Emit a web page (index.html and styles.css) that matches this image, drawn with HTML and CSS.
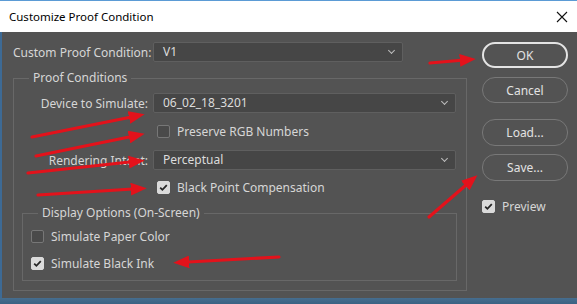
FILE: index.html
```html
<!DOCTYPE html>
<html lang="en">
<head>
    <meta charset="UTF-8">
    <meta name="viewport" content="width=device-width, initial-scale=1.0">
    <title>Customize Proof Condition</title>
    <link rel="stylesheet" href="styles.css">
</head>
<body>
    <div class="dialog">
        <header class="titlebar">
            <span class="title">Customize Proof Condition</span>
            <svg class="close" width="12" height="12" viewBox="0 0 12 12">
                <path d="M1 1 L11 11 M11 1 L1 11" stroke="#111" stroke-width="1.1" fill="none"/>
            </svg>
        </header>

        <div class="content">
            <div class="main">
                <div class="row">
                    <span class="label wide">Custom Proof Condition:</span>
                    <div class="select short">V1<span class="chev"></span></div>
                </div>

                <fieldset class="group outer">
                    <legend>Proof Conditions</legend>
                    <div class="row">
                        <span class="label">Device to Simulate:</span>
                        <div class="select">06_02_18_3201<span class="chev"></span></div>
                    </div>
                    <div class="check-row indent r-preserve">
                        <span class="box"></span>Preserve RGB Numbers
                    </div>
                    <div class="row r-intent">
                        <span class="label">Rendering Intent:</span>
                        <div class="select">Perceptual<span class="chev"></span></div>
                    </div>
                    <div class="check-row indent r-black">
                        <span class="box checked"></span>Black Point Compensation
                    </div>

                    <fieldset class="group inner">
                        <legend>Display Options (On-Screen)</legend>
                        <div class="check-row r-paper">
                            <span class="box"></span>Simulate Paper Color
                        </div>
                        <div class="check-row r-ink">
                            <span class="box checked"></span>Simulate Black Ink
                        </div>
                    </fieldset>
                </fieldset>
            </div>

            <div class="side">
                <button class="btn default">OK</button>
                <button class="btn b-cancel">Cancel</button>
                <button class="btn b-load">Load...</button>
                <button class="btn b-save">Save...</button>
                <div class="check-row r-preview">
                    <span class="box checked"></span>Preview
                </div>
            </div>
        </div>

        <div class="taskbar"></div>

        <!-- red annotation arrows drawn over the screenshot -->
        <svg class="marks" width="577" height="304" viewBox="0 0 577 304">
            <defs>
                <marker id="head" markerWidth="5" markerHeight="4" refX="3.2" refY="2" orient="auto" markerUnits="strokeWidth">
                    <path d="M0 0 L5 2 L0 4 Z" fill="#e3121b"/>
                </marker>
            </defs>
            <g stroke="#e3121b" stroke-width="3.2" stroke-linecap="round" fill="none" marker-end="url(#head)">
                <line x1="430" y1="63" x2="470" y2="59.5"/>
                <line x1="32" y1="137" x2="139" y2="115.5"/>
                <line x1="36" y1="156" x2="139" y2="135"/>
                <line x1="28" y1="173" x2="139" y2="161"/>
                <line x1="38" y1="195" x2="141" y2="188.5"/>
                <line x1="429" y1="217" x2="473" y2="179"/>
                <line x1="279" y1="257" x2="179" y2="262.5"/>
            </g>
        </svg>
    </div>
</body>
</html>
```

FILE: styles.css
```css
body {
    margin: 0;
    padding: 0;
    font-family: "Noto Sans", "Open Sans", sans-serif;
    background-color: #535353;
}
.dialog {
    position: relative;
    width: 577px;
    height: 304px;
    overflow: hidden;
    background-color: #535353;
}
.titlebar {
    display: flex;
    align-items: center;
    justify-content: space-between;
    height: 31px;
    border-top: 1px solid #5b9bd5;
    background-color: #fff;
    padding: 0 9px 0 9px;
}
.title {
    font-size: 11.5px;
    color: #000;
}
.content {
    display: flex;
    height: 256px;
    padding: 10px 0 0 11px;
    border-left: 2px solid #3d6a95;
}
.main {
    width: 454px;
}
.side {
    display: flex;
    flex-direction: column;
    width: 86px;
    margin-left: 15px;
}
.taskbar {
    height: 6px;
    background: linear-gradient(#466d8e, #3a6283);
}

.row {
    display: flex;
    align-items: center;
    height: 20px;
}
.label {
    width: 134px;
    margin-right: 5px;
    text-align: right;
    white-space: nowrap;
    font-size: 12px;
    color: #d6d6d6;
}
.label.wide {
    width: 135px;
}
.select {
    position: relative;
    flex: 1;
    height: 18px;
    line-height: 18px;
    padding-left: 9px;
    background-color: #464646;
    border: 1px solid #5f5f5f;
    border-radius: 2px;
    font-size: 12px;
    color: #dcdcdc;
}
.select.short {
    flex: none;
    width: 239px;
}
.chev {
    position: absolute;
    right: 8px;
    top: 5px;
    width: 4px;
    height: 4px;
    border-right: 1px solid #bdbdbd;
    border-bottom: 1px solid #bdbdbd;
    transform: rotate(45deg);
}

.group {
    margin: 0;
    border: 1px solid #686868;
}
.group legend {
    height: 16px;
    line-height: 16px;
    padding: 0 4px;
    margin-left: 15px;
    font-size: 12px;
    color: #d6d6d6;
}
.outer {
    margin-top: 8px;
    padding: 7px 10px 9px 0;
}
.inner {
    margin: 8px -1px 0 8px;
    padding: 5px 0 7px 8px;
}
.inner legend {
    margin-left: 7px;
}

.check-row {
    display: flex;
    align-items: center;
    height: 20px;
    font-size: 12px;
    color: #d6d6d6;
}
.indent {
    margin-left: 143px;
}
.r-preserve { margin-top: 8px; }
.r-intent { margin-top: 9px; }
.r-black { margin-top: 7px; }
.r-ink { margin-top: 7px; }
.r-preview { margin-top: 15px; }

.box {
    box-sizing: border-box;
    width: 13px;
    height: 13px;
    margin-right: 7px;
    border: 1px solid #777;
    border-radius: 2px;
    background-color: #4a4a4a;
}
.box.checked {
    border-color: #dadada;
    background: #dadada url("data:image/svg+xml;utf8,<svg xmlns='http://www.w3.org/2000/svg' width='11' height='11' viewBox='0 0 11 11'><path d='M2.2 5.6 L4.4 7.8 L8.8 3.2' stroke='%23262626' stroke-width='1.8' fill='none'/></svg>") center no-repeat;
}

.btn {
    height: 26px;
    padding: 0;
    border: 1px solid #787878;
    border-radius: 13px;
    background-color: #535353;
    font-family: "Noto Sans", "Open Sans", sans-serif;
    font-size: 12px;
    color: #e2e2e2;
}
.btn.default {
    border: 2px solid #e4e4e4;
}
.b-cancel { margin-top: 9px; }
.b-load { margin-top: 16px; height: 27px; }
.b-save { margin-top: 8px; height: 27px; }

.marks {
    position: absolute;
    left: 0;
    top: 0;
    pointer-events: none;
}
```
